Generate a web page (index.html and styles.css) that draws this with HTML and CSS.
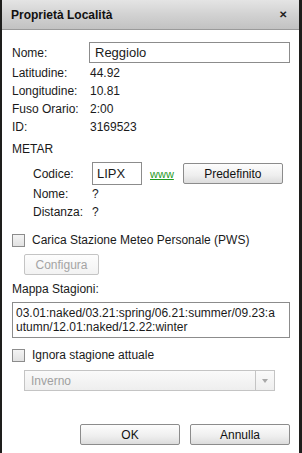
FILE: index.html
```html
<!DOCTYPE html>
<html lang="it">

<head>
    <meta charset="UTF-8">
    <meta name="viewport" content="width=device-width, initial-scale=1.0">
    <title>Proprietà Località</title>
    <link rel="stylesheet" href="styles.css">
</head>

<body>
    <div class="dialog">
        <div class="title-bar">
            <span class="title">Proprietà Località</span>
            <span class="close">&#x2715;</span>
        </div>

        <div class="content">
            <div class="name-row">
                <span class="label">Nome:</span>
                <div class="input name-input">Reggiolo</div>
            </div>

            <div class="info">
                <span class="label">Latitudine:</span><span>44.92</span>
                <span class="label">Longitudine:</span><span>10.81</span>
                <span class="label">Fuso Orario:</span><span>2:00</span>
                <span class="label">ID:</span><span>3169523</span>
            </div>

            <div class="section-title">METAR</div>

            <div class="metar">
                <div class="code-row">
                    <span class="label sub-label">Codice:</span>
                    <div class="input code-input">LIPX</div>
                    <a class="www" href="#">www</a>
                    <button class="btn btn-default">Predefinito</button>
                </div>
                <div class="metar-info">
                    <span class="label sub-label">Nome:</span><span>?</span>
                    <span class="label sub-label">Distanza:</span><span>?</span>
                </div>
            </div>

            <label class="check-row pws">
                <span class="checkbox"></span>
                <span>Carica Stazione Meteo Personale (PWS)</span>
            </label>

            <button class="btn btn-config" disabled>Configura</button>

            <div class="section-title map-title">Mappa Stagioni:</div>
            <div class="textarea">03.01:naked/03.21:spring/06.21:summer/09.23:autumn/12.01:naked/12.22:winter</div>

            <label class="check-row ignore">
                <span class="checkbox"></span>
                <span>Ignora stagione attuale</span>
            </label>

            <div class="select">
                <span class="select-value">Inverno</span>
                <span class="select-arrow"></span>
            </div>

            <div class="actions">
                <button class="btn">OK</button>
                <button class="btn">Annulla</button>
            </div>
        </div>
    </div>
</body>

</html>
```

FILE: styles.css
```css
body {
    margin: 0;
    width: 302px;
    height: 453px;
    overflow: hidden;
    background: #1e1e1c;
    font-family: "Liberation Sans", Arial, sans-serif;
    font-size: 12px;
    color: #1a1a1a;
}

.dialog {
    height: 453px;
    margin-left: 2px;
    margin-right: 3px;
    background: white;
    display: flex;
    flex-direction: column;
}

.title-bar {
    height: 29px;
    border-bottom: 1px solid #9a9a9a;
    background: linear-gradient(#e4e4e4 0%, #d2d2d2 50%, #c2c2c2 100%);
    display: flex;
    align-items: center;
    justify-content: space-between;
    padding: 0 12px 0 9px;
}

.title {
    font-weight: bold;
    font-size: 12px;
    color: #111;
}

.close {
    font-size: 10px;
    font-weight: bold;
    color: #222;
}

.content {
    padding: 12px 9px 0 10px;
    display: flex;
    flex-direction: column;
}

.name-row {
    display: flex;
    align-items: center;
    height: 21px;
}

.name-row .label {
    width: 77px;
}

.input {
    box-sizing: border-box;
    border: 1px solid #8c8c8c;
    background: white;
    padding: 0 5px;
    font-size: 13px;
    display: flex;
    align-items: center;
}

.name-input {
    flex: 1;
    height: 21px;
}

.info {
    display: grid;
    grid-template-columns: 78px 1fr;
    grid-auto-rows: 18px;
    align-items: center;
    margin-top: 1px;
}

.section-title {
    height: 18px;
    line-height: 18px;
    margin-top: 4px;
}

.metar {
    padding-left: 21px;
}

.code-row {
    display: flex;
    align-items: center;
    height: 23px;
    margin-top: 4px;
}

.sub-label {
    width: 59px;
}

.code-input {
    width: 50px;
    height: 23px;
    padding-left: 4px;
}

.www {
    color: #1f9a1f;
    margin-left: 8px;
    margin-right: 9px;
    font-size: 11px;
}

.metar-info {
    display: grid;
    grid-template-columns: 59px 1fr;
    grid-auto-rows: 18px;
    align-items: center;
}

.btn {
    box-sizing: border-box;
    height: 21px;
    width: 100px;
    border: 1px solid #8c8c8c;
    border-radius: 2px;
    background: linear-gradient(#fdfdfd 0%, #eeeeee 60%, #dcdcdc 100%);
    font-family: "Liberation Sans", Arial, sans-serif;
    font-size: 12px;
    color: #111;
    padding: 0;
}

.btn-default {
    width: 100px;
}

.btn-config {
    width: 75px;
    margin: 5px 0 0 12px;
    border-color: #c4c4c4;
    color: #a4a4a4;
    background: linear-gradient(#fdfdfd 0%, #f2f2f2 100%);
}

.check-row {
    display: flex;
    align-items: center;
    gap: 7px;
    height: 18px;
    margin-top: 10px;
    margin-left: 0;
}

.checkbox {
    box-sizing: border-box;
    width: 13px;
    height: 13px;
    border: 1px solid #8c8c8c;
    background: linear-gradient(#f4f4f4, #e2e2e2);
}

.map-title {
    margin-top: 5px;
}

.textarea {
    box-sizing: border-box;
    height: 36px;
    margin-top: 4px;
    border: 1px solid #8c8c8c;
    padding: 3px 14px 3px 3px;
    line-height: 14px;
    word-break: break-all;
}

.ignore {
    margin-top: 8px;
}

.select {
    box-sizing: border-box;
    display: flex;
    align-items: center;
    height: 21px;
    width: 251px;
    margin: 6px 0 0 12px;
    border: 1px solid #c4c4c4;
    background: linear-gradient(#fafafa, #eeeeee);
    color: #a0a0a0;
}

.select-value {
    flex: 1;
    padding-left: 6px;
}

.select-arrow {
    width: 18px;
    height: 19px;
    border-left: 1px solid #c4c4c4;
    position: relative;
}

.select-arrow::after {
    content: "";
    position: absolute;
    left: 6px;
    top: 8px;
    border-left: 3px solid transparent;
    border-right: 3px solid transparent;
    border-top: 4px solid #a8a8a8;
}

.actions {
    display: flex;
    justify-content: flex-end;
    gap: 10px;
    margin-top: 33px;
}
```
